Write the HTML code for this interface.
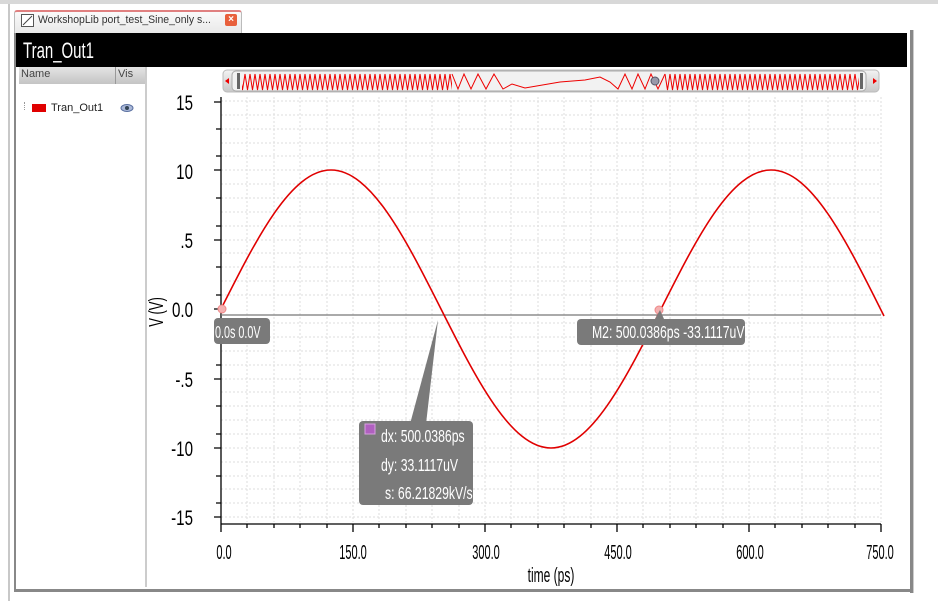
<!DOCTYPE html>
<html><head><meta charset="utf-8"><style>
body{margin:0;width:938px;height:601px;background:#fff;font-family:"Liberation Sans",sans-serif;overflow:hidden;position:relative}
.abs{position:absolute}
</style></head><body>
<div class="abs" style="left:0;top:0;width:938px;height:4px;background:#d8d8d8"></div>
<div class="abs" style="left:8px;top:4px;width:2px;height:597px;background:#c8c8c8"></div>
<div class="abs" style="left:14px;top:10px;width:226px;height:22px;background:linear-gradient(#fafafa,#e8e8e8);border:1px solid #bbb;border-top:2px solid #e08080;border-bottom:none;border-radius:3px 3px 0 0"></div>
<div class="abs" style="left:21px;top:14px;width:11px;height:11px;border:1px solid #555;background:#fff"></div>
<svg class="abs" style="left:21px;top:14px" width="13" height="13"><line x1="2" y1="11" x2="11" y2="2" stroke="#444"/></svg>
<div class="abs" style="left:38px;top:14px;font-size:11px;color:#333;white-space:nowrap;transform:scaleX(0.95);transform-origin:left">WorkshopLib port_test_Sine_only s...</div>
<div class="abs" style="left:225px;top:14px;width:12px;height:12px;background:#e8603c;border-radius:2px;color:#fff;font-size:10px;line-height:12px;text-align:center;font-weight:bold">×</div>
<div class="abs" style="left:16px;top:33px;width:891px;height:34px;background:#000"></div>
<div class="abs" style="left:23px;top:38px;color:#fff;font-size:22px;transform:scaleX(0.68);transform-origin:left;white-space:nowrap">Tran_Out1</div>
<div class="abs" style="left:19px;top:67px;width:126px;height:520px;background:#fff;border-right:2px solid #ccc"></div>
<div class="abs" style="left:19px;top:67px;width:126px;height:17px;background:linear-gradient(#e4e4e4,#c4c4c4)"></div>
<div class="abs" style="left:115px;top:67px;width:1px;height:17px;background:#999"></div>
<div class="abs" style="left:21px;top:68px;font-size:11px;color:#444">Name</div>
<div class="abs" style="left:118px;top:68px;font-size:11px;color:#444">Vis</div>
<div class="abs" style="left:24px;top:102px;width:1px;height:8px;border-left:1px dotted #999"></div>
<div class="abs" style="left:32px;top:104px;width:14px;height:8px;background:#e00000"></div>
<div class="abs" style="left:51px;top:102px;font-size:11px;color:#222">Tran_Out1</div>
<svg class="abs" style="left:120px;top:103px" width="14" height="10"><ellipse cx="7" cy="5" rx="6" ry="3.5" fill="#aab8d8" stroke="#5a70a0"/><circle cx="7" cy="5" r="2" fill="#345"/></svg>
<div class="abs" style="left:910px;top:30px;width:3px;height:563px;background:#888;border-right:1px solid #ccc"></div>
<div class="abs" style="left:14px;top:589px;width:899px;height:3px;background:#888"></div>
<div class="abs" style="left:14px;top:33px;width:2px;height:558px;background:#888"></div>
<svg class="abs" style="left:0;top:0" width="938" height="601">
<defs>
<linearGradient id="g" x1="0" y1="0" x2="0" y2="1"><stop offset="0" stop-color="#f4f4f4"/><stop offset="0.5" stop-color="#dcdcdc"/><stop offset="1" stop-color="#c8c8c8"/></linearGradient>
<pattern id="zz" width="5" height="40" patternUnits="userSpaceOnUse" patternTransform="translate(0,71)"><polyline points="0,3 2.5,19 5,3" fill="none" stroke="#e00" stroke-width="1"/></pattern>
</defs>
<rect x="223" y="70" width="656" height="22" rx="4" fill="url(#g)" stroke="#bbb"/>
<rect x="232" y="71" width="634" height="20" rx="4" fill="#f2f2f2" stroke="#aaa"/>
<polygon points="229,78 229,84 225,81" fill="#e00"/>
<polygon points="873,78 873,84 877,81" fill="#e00"/>
<rect x="237" y="73" width="3" height="16" fill="#666"/>
<rect x="860" y="73" width="3" height="16" fill="#666"/>
<rect x="242" y="72" width="210" height="19" fill="url(#zz)"/>
<rect x="665" y="72" width="194" height="19" fill="url(#zz)"/>
<path d="M452,74 L458,89 L464,74 L471,89 L478,74 L486,89 L494,74 L503,89 L512,84 L525,88 L560,82 L585,80 L600,77 L610,82 L618,89 L625,74 L632,89 L638,74 L645,89 L651,74 L658,89 L665,74" fill="none" stroke="#e00"/>
<circle cx="655" cy="81" r="4" fill="#99a" stroke="#556"/>
<g stroke="#dedede" stroke-dasharray="2,2" stroke-width="1">
<line x1="247" y1="97" x2="247" y2="522"/><line x1="274" y1="97" x2="274" y2="522"/><line x1="300" y1="97" x2="300" y2="522"/><line x1="327" y1="97" x2="327" y2="522"/><line x1="353" y1="97" x2="353" y2="522"/><line x1="379" y1="97" x2="379" y2="522"/><line x1="406" y1="97" x2="406" y2="522"/><line x1="432" y1="97" x2="432" y2="522"/><line x1="459" y1="97" x2="459" y2="522"/><line x1="485" y1="97" x2="485" y2="522"/><line x1="511" y1="97" x2="511" y2="522"/><line x1="538" y1="97" x2="538" y2="522"/><line x1="564" y1="97" x2="564" y2="522"/><line x1="591" y1="97" x2="591" y2="522"/><line x1="617" y1="97" x2="617" y2="522"/><line x1="643" y1="97" x2="643" y2="522"/><line x1="670" y1="97" x2="670" y2="522"/><line x1="696" y1="97" x2="696" y2="522"/><line x1="723" y1="97" x2="723" y2="522"/><line x1="749" y1="97" x2="749" y2="522"/><line x1="775" y1="97" x2="775" y2="522"/><line x1="802" y1="97" x2="802" y2="522"/><line x1="828" y1="97" x2="828" y2="522"/><line x1="855" y1="97" x2="855" y2="522"/><line x1="881" y1="97" x2="881" y2="522"/>
<line x1="221" y1="101" x2="881" y2="101"/><line x1="221" y1="115" x2="881" y2="115"/><line x1="221" y1="129" x2="881" y2="129"/><line x1="221" y1="143" x2="881" y2="143"/><line x1="221" y1="156" x2="881" y2="156"/><line x1="221" y1="170" x2="881" y2="170"/><line x1="221" y1="184" x2="881" y2="184"/><line x1="221" y1="198" x2="881" y2="198"/><line x1="221" y1="212" x2="881" y2="212"/><line x1="221" y1="226" x2="881" y2="226"/><line x1="221" y1="240" x2="881" y2="240"/><line x1="221" y1="253" x2="881" y2="253"/><line x1="221" y1="267" x2="881" y2="267"/><line x1="221" y1="281" x2="881" y2="281"/><line x1="221" y1="295" x2="881" y2="295"/><line x1="221" y1="323" x2="881" y2="323"/><line x1="221" y1="337" x2="881" y2="337"/><line x1="221" y1="351" x2="881" y2="351"/><line x1="221" y1="365" x2="881" y2="365"/><line x1="221" y1="379" x2="881" y2="379"/><line x1="221" y1="392" x2="881" y2="392"/><line x1="221" y1="406" x2="881" y2="406"/><line x1="221" y1="420" x2="881" y2="420"/><line x1="221" y1="434" x2="881" y2="434"/><line x1="221" y1="448" x2="881" y2="448"/><line x1="221" y1="462" x2="881" y2="462"/><line x1="221" y1="476" x2="881" y2="476"/><line x1="221" y1="489" x2="881" y2="489"/><line x1="221" y1="503" x2="881" y2="503"/><line x1="221" y1="517" x2="881" y2="517"/>
</g>
<g stroke="#000" stroke-width="1.3">
<line x1="221" y1="97" x2="221" y2="524"/>
<line x1="221" y1="524" x2="881" y2="524"/>
<path d="M214,102h7M216,129h5M216,156h5M214,170h7M216,198h5M216,226h5M214,240h7M216,267h5M216,295h5M214,309h7M216,337h5M216,365h5M214,379h7M216,406h5M216,434h5M214,448h7M216,476h5M216,503h5M214,517h7"/>
<path d="M221,524v8M247,524v4M274,524v4M300,524v4M327,524v4M353,524v8M379,524v4M406,524v4M432,524v4M459,524v4M485,524v8M511,524v4M538,524v4M564,524v4M591,524v4M617,524v8M643,524v4M670,524v4M696,524v4M723,524v4M749,524v8M775,524v4M802,524v4M828,524v4M855,524v4M881,524v8"/>
</g>
<line x1="221" y1="315" x2="881" y2="315" stroke="#777" stroke-width="1.2"/>
<path d="M221,309 C256.9,237.8 291.2,170 331,170 C370.8,170 405.1,237.8 441,309 C476.9,380.2 511.2,448 551,448 C590.8,448 625.1,380.2 661,309 C696.9,237.8 731.2,170 771,170 C810.8,170 845.1,237.8 884,316" fill="none" stroke="#e00000" stroke-width="1.6"/>
<circle cx="222" cy="309" r="4" fill="#f4b0b0" stroke="#e88" />
<circle cx="659" cy="310" r="4" fill="#f4b0b0" stroke="#e88" />
<rect x="214" y="318" width="56" height="26" rx="4" fill="#7a7a7a"/>
<rect x="577" y="319" width="168" height="26" rx="4" fill="#7a7a7a"/>
<polygon points="655,319 664,319 660,310" fill="#7a7a7a"/>
<polygon points="410,424 426,424 438,320" fill="#7a7a7a"/>
<rect x="359" y="421" width="114" height="84" rx="4" fill="#7a7a7a"/>
<rect x="365" y="424" width="10" height="10" fill="#b060c0" stroke="#d8a0e0"/>
<g fill="#fff" font-size="18" font-family="Liberation Sans, sans-serif">
<text x="215" y="338" transform="translate(215,0) scale(0.6,1) translate(-215,0)">0.0s 0.0V</text>
<text x="592" y="338" transform="translate(592,0) scale(0.68,1) translate(-592,0)">M2: 500.0386ps -33.1117uV</text>
<text x="381" y="442" transform="translate(381,0) scale(0.68,1) translate(-381,0)">dx: 500.0386ps</text>
<text x="381" y="471" transform="translate(381,0) scale(0.68,1) translate(-381,0)">dy: 33.1117uV</text>
<text x="385" y="499" transform="translate(385,0) scale(0.68,1) translate(-385,0)">s: 66.21829kV/s</text>
</g>
<g fill="#000" font-size="21" font-family="Liberation Sans, sans-serif" text-anchor="end">
<text x="193" y="110" transform="translate(193,0) scale(0.72,1) translate(-193,0)">15</text>
<text x="193" y="179" transform="translate(193,0) scale(0.72,1) translate(-193,0)">10</text>
<text x="193" y="248" transform="translate(193,0) scale(0.72,1) translate(-193,0)">.5</text>
<text x="193" y="317" transform="translate(193,0) scale(0.72,1) translate(-193,0)">0.0</text>
<text x="193" y="387" transform="translate(193,0) scale(0.72,1) translate(-193,0)">-.5</text>
<text x="193" y="456" transform="translate(193,0) scale(0.72,1) translate(-193,0)">-10</text>
<text x="193" y="525" transform="translate(193,0) scale(0.72,1) translate(-193,0)">-15</text>
</g>
<g fill="#000" font-size="20" font-family="Liberation Sans, sans-serif" text-anchor="middle">
<text x="224" y="559" transform="translate(224,0) scale(0.55,1) translate(-224,0)">0.0</text>
<text x="353" y="559" transform="translate(353,0) scale(0.55,1) translate(-353,0)">150.0</text>
<text x="486" y="559" transform="translate(486,0) scale(0.55,1) translate(-486,0)">300.0</text>
<text x="618" y="559" transform="translate(618,0) scale(0.55,1) translate(-618,0)">450.0</text>
<text x="750" y="559" transform="translate(750,0) scale(0.55,1) translate(-750,0)">600.0</text>
<text x="880" y="559" transform="translate(880,0) scale(0.55,1) translate(-880,0)">750.0</text>
<text x="551" y="582" transform="translate(551,0) scale(0.6,1) translate(-551,0)">time (ps)</text>
</g>
<text x="0" y="0" font-size="20" font-family="Liberation Sans, sans-serif" text-anchor="middle" transform="translate(163,312) rotate(-90) scale(0.65,1)">V (V)</text>
</svg>
</body></html>
